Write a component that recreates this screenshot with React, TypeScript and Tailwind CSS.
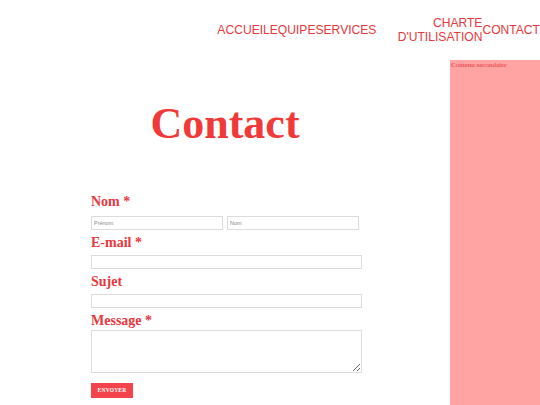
import React from 'react';

const serif = { fontFamily: '"Liberation Serif", "DejaVu Serif", serif' };

function Label({ text, required }: { text: string; required?: boolean }) {
  return (
    <div className="text-[14px] leading-[14px] font-bold text-[#e8383d]" style={serif}>
      {text}
      {required && ' *'}
    </div>
  );
}

export default function App() {
  return (
    <div className="w-[540px] h-[405px] overflow-hidden bg-white" style={{ fontFamily: '"Liberation Sans", Arial, sans-serif' }}>
      {/* Header nav */}
      <nav className="h-[60px] flex justify-end items-center text-[12.1px] leading-[13.5px] text-[#e8383d] pt-[1px]">
        <a className="block">ACCUEIL</a>
        <a className="block">EQUIPE</a>
        <a className="block">SERVICES</a>
        <a className="block w-[106px] text-right">CHARTE D'UTILISATION</a>
        <a className="block">CONTACT</a>
      </nav>

      <div className="flex">
        {/* Main content */}
        <main className="w-[450px]">
          <h1 className="text-center text-[44px] leading-[44px] font-bold text-[#f03a3a] mt-[42px]" style={serif}>
            Contact
          </h1>

          <form className="ml-[91px] w-[271px] mt-[49px] flex flex-col">
            <Label text="Nom" required />
            <div className="flex gap-[4px] mt-[7px] w-[268px]">
              <input
                placeholder="Prénom"
                className="w-[132px] h-[14px] border border-[#dcdcdc] text-[5.5px] px-[2px] placeholder:text-[#888]"
              />
              <input
                placeholder="Nom"
                className="w-[132px] h-[14px] border border-[#dcdcdc] text-[5.5px] px-[2px] placeholder:text-[#888]"
              />
            </div>

            <div className="mt-[6px]">
              <Label text="E-mail" required />
            </div>
            <input className="mt-[5px] w-full h-[14px] border border-[#dcdcdc]" />

            <div className="mt-[6px]">
              <Label text="Sujet" />
            </div>
            <input className="mt-[5px] w-full h-[14px] border border-[#dcdcdc]" />

            <div className="mt-[6px]">
              <Label text="Message" required />
            </div>
            <textarea className="mt-[2px] w-full h-[43px] border border-[#dcdcdc]" />

            <button
              type="button"
              className="mt-[10px] w-[42px] h-[15px] bg-[#f2444a] text-white text-[5.5px] font-bold tracking-[0.2px]"
              style={serif}
            >
              ENVOYER
            </button>
          </form>
        </main>

        {/* Sidebar */}
        <aside className="w-[90px] h-[345px] bg-[#ffa3a3]">
          <div className="text-[7px] leading-[9px] text-[#e8383d] pl-[1px] pt-[1px]" style={serif}>
            Contenu secondaire
          </div>
        </aside>
      </div>
    </div>
  );
}
